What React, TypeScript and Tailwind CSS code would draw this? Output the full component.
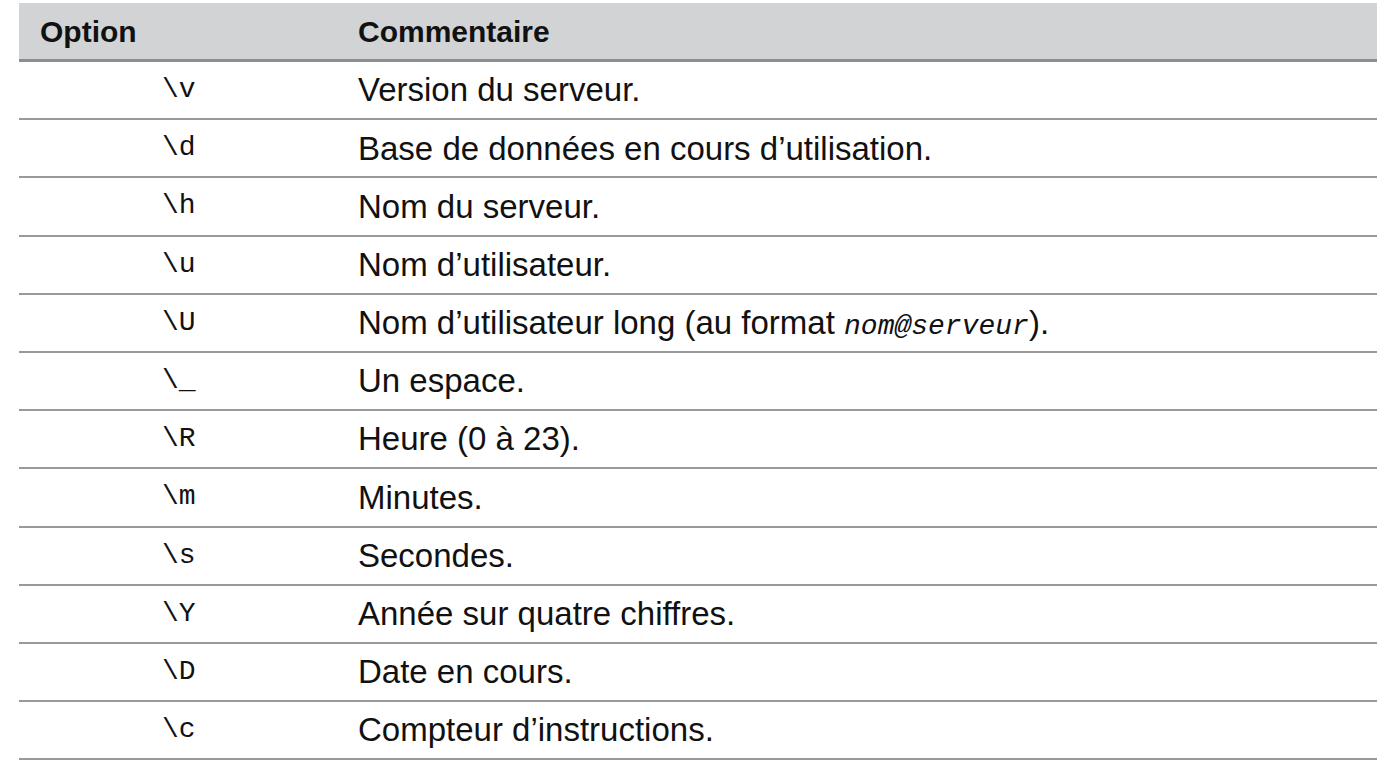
const rows: { opt: string; text: React.ReactNode }[] = [
  { opt: '\\v', text: 'Version du serveur.' },
  { opt: '\\d', text: 'Base de données en cours d’utilisation.' },
  { opt: '\\h', text: 'Nom du serveur.' },
  { opt: '\\u', text: 'Nom d’utilisateur.' },
  {
    opt: '\\U',
    text: (
      <>
        Nom d’utilisateur long (au format{' '}
        <span className="font-['Liberation_Mono',monospace] italic font-light text-[28px] leading-none">nom@serveur</span>).
      </>
    ),
  },
  { opt: '\\_', text: 'Un espace.' },
  { opt: '\\R', text: 'Heure (0 à 23).' },
  { opt: '\\m', text: 'Minutes.' },
  { opt: '\\s', text: 'Secondes.' },
  { opt: '\\Y', text: 'Année sur quatre chiffres.' },
  { opt: '\\D', text: 'Date en cours.' },
  { opt: '\\c', text: 'Compteur d’instructions.' },
]

export default function App() {
  return (
    <div className="min-h-screen bg-white pt-[3px] pl-[19px] pr-[7px] font-['Liberation_Sans',Arial,sans-serif] text-[30px] text-[#111]">
      <div className="grid grid-cols-[322px_1fr] h-[59px] items-center bg-[#d2d3d5] border-b-[3px] border-[#8e8e8e] font-bold">
        <div className="pl-[21px]">Option</div>
        <div className="pl-[17px]">Commentaire</div>
      </div>
      {rows.map(r => (
        <div
          key={r.opt}
          className="grid grid-cols-[322px_1fr] h-[58.2px] items-center border-b-2 border-[#999999]"
        >
          <div className="pl-[143px] font-['Liberation_Mono',monospace] text-[28px] leading-none">
            {r.opt}
          </div>
          <div className="pl-[17px] whitespace-nowrap text-[33px]">{r.text}</div>
        </div>
      ))}
    </div>
  )
}
